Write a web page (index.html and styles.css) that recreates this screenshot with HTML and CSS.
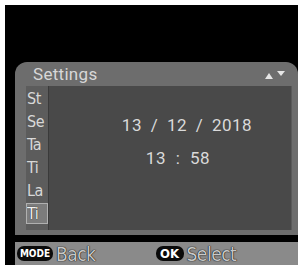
FILE: index.html
```html
<!DOCTYPE html>
<html>
<head>
<meta charset="utf-8">
<link rel="stylesheet" href="styles.css">
</head>
<body>
<div class="screen">
  <div class="panel">
    <div class="titlebar">
      <span class="title">Settings</span>
      <span class="arrows">
        <svg width="22" height="10" viewBox="0 0 22 10"><polygon points="1,9 5,3 9,9" fill="#e6e6e6"/><polygon points="13,1 21,1 17,6" fill="#e6e6e6"/></svg>
      </span>
    </div>
    <div class="body">
      <ul class="list">
        <li>St</li>
        <li>Se</li>
        <li>Ta</li>
        <li>Ti</li>
        <li>La</li>
        <li class="sel">Ti</li>
      </ul>
      <div class="content">
        <div class="date">13 / 12 / 2018</div>
        <div class="time">13 : 58</div>
      </div>
    </div>
  </div>
  <div class="gap"></div>
  <div class="bottombar">
    <span class="badge mode">MODE</span><span class="label">Back</span>
    <span class="badge ok">OK</span><span class="label">Select</span>
  </div>
</div>
</body>
</html>
```

FILE: styles.css
```css
html, body {
  margin: 0;
  padding: 0;
  background: #fff;
  width: 298px;
  height: 265px;
  overflow: hidden;
  font-family: "DejaVu Sans Condensed", Roboto, "Liberation Sans", sans-serif;
}
.screen {
  margin: 5px 0 0 5px;
  background: #000;
  height: 260px;
  display: flex;
  flex-direction: column;
  padding-top: 57px;
  box-sizing: border-box;
}
.panel {
  margin-left: 10px;
  height: 173px;
  background: #6d6d6d;
  border-radius: 12px 12px 0 0;
  display: flex;
  flex-direction: column;
}
.titlebar {
  height: 24px;
  display: flex;
  align-items: center;
  justify-content: space-between;
  padding: 0 12px 0 18px;
}
.title {
  color: #d8d8d8;
  font-size: 17px;
  font-family: Roboto, sans-serif;
  letter-spacing: 0.3px;
}
.arrows { display: flex; align-items: center; padding-top: 2px; }
.body {
  display: flex;
  height: 144px;
  margin-left: 11px;
  margin-right: 6px;
}
.list {
  list-style: none;
  margin: 0;
  padding: 2px 0 0 0;
  flex: 0 0 22px;
  min-width: 0;
  overflow: hidden;
  background: #5c5c5c;
  display: flex;
  flex-direction: column;
  gap: 2px;
}
.list li {
  height: 21px;
  white-space: nowrap;
  color: #d8d8d8;
  font-size: 16px;
  font-family: "DejaVu Sans Condensed", sans-serif;
  line-height: 21px;
  padding-left: 1px;
  box-sizing: border-box;
  letter-spacing: -0.5px;
}
.list li.sel {
  background: #7c7c7c;
  border: 1px solid #b0b0b0;
  line-height: 19px;
  padding-left: 0;
  color: #f0f0f0;
  text-shadow: 0 0 1px #000;
}
.content {
  flex: 1;
  background: #494949;
  border-left: 1px solid #3a3a3a;
  border-right: 1px solid #5a5a5a;
  display: flex;
  flex-direction: column;
  align-items: center;
  padding-top: 29px;
  color: #dadada;
  font-family: Roboto, sans-serif;
  font-size: 17px;
}
.date { letter-spacing: 0.5px; word-spacing: 4px; height: 33px; padding-left: 34px; }
.time { letter-spacing: 0.5px; word-spacing: 5px; padding-left: 16px; }
.gap { height: 7px; }
.bottombar {
  margin-left: 10px;
  flex: 1;
  background: #8a8a8a;
  display: flex;
  align-items: center;
  padding-left: 2px;
}
.badge {
  background: #0a0a0a;
  color: #fff;
  font-family: "DejaVu Sans Condensed", sans-serif;
  font-weight: bold;
  border-radius: 7px;
  height: 15px;
  line-height: 15px;
  display: inline-block;
  text-align: center;
}
.mode { font-size: 10px; width: 36px; }
.ok { font-size: 13px; width: 28px; margin-left: 60px; }
.label {
  color: #c8c8c8;
  font-size: 19px;
  font-family: "DejaVu Sans Condensed", sans-serif;
  margin-left: 3px;
  letter-spacing: -0.5px;
  text-shadow: 0 0 1px #000, 0 0 1px #000;
}
```
